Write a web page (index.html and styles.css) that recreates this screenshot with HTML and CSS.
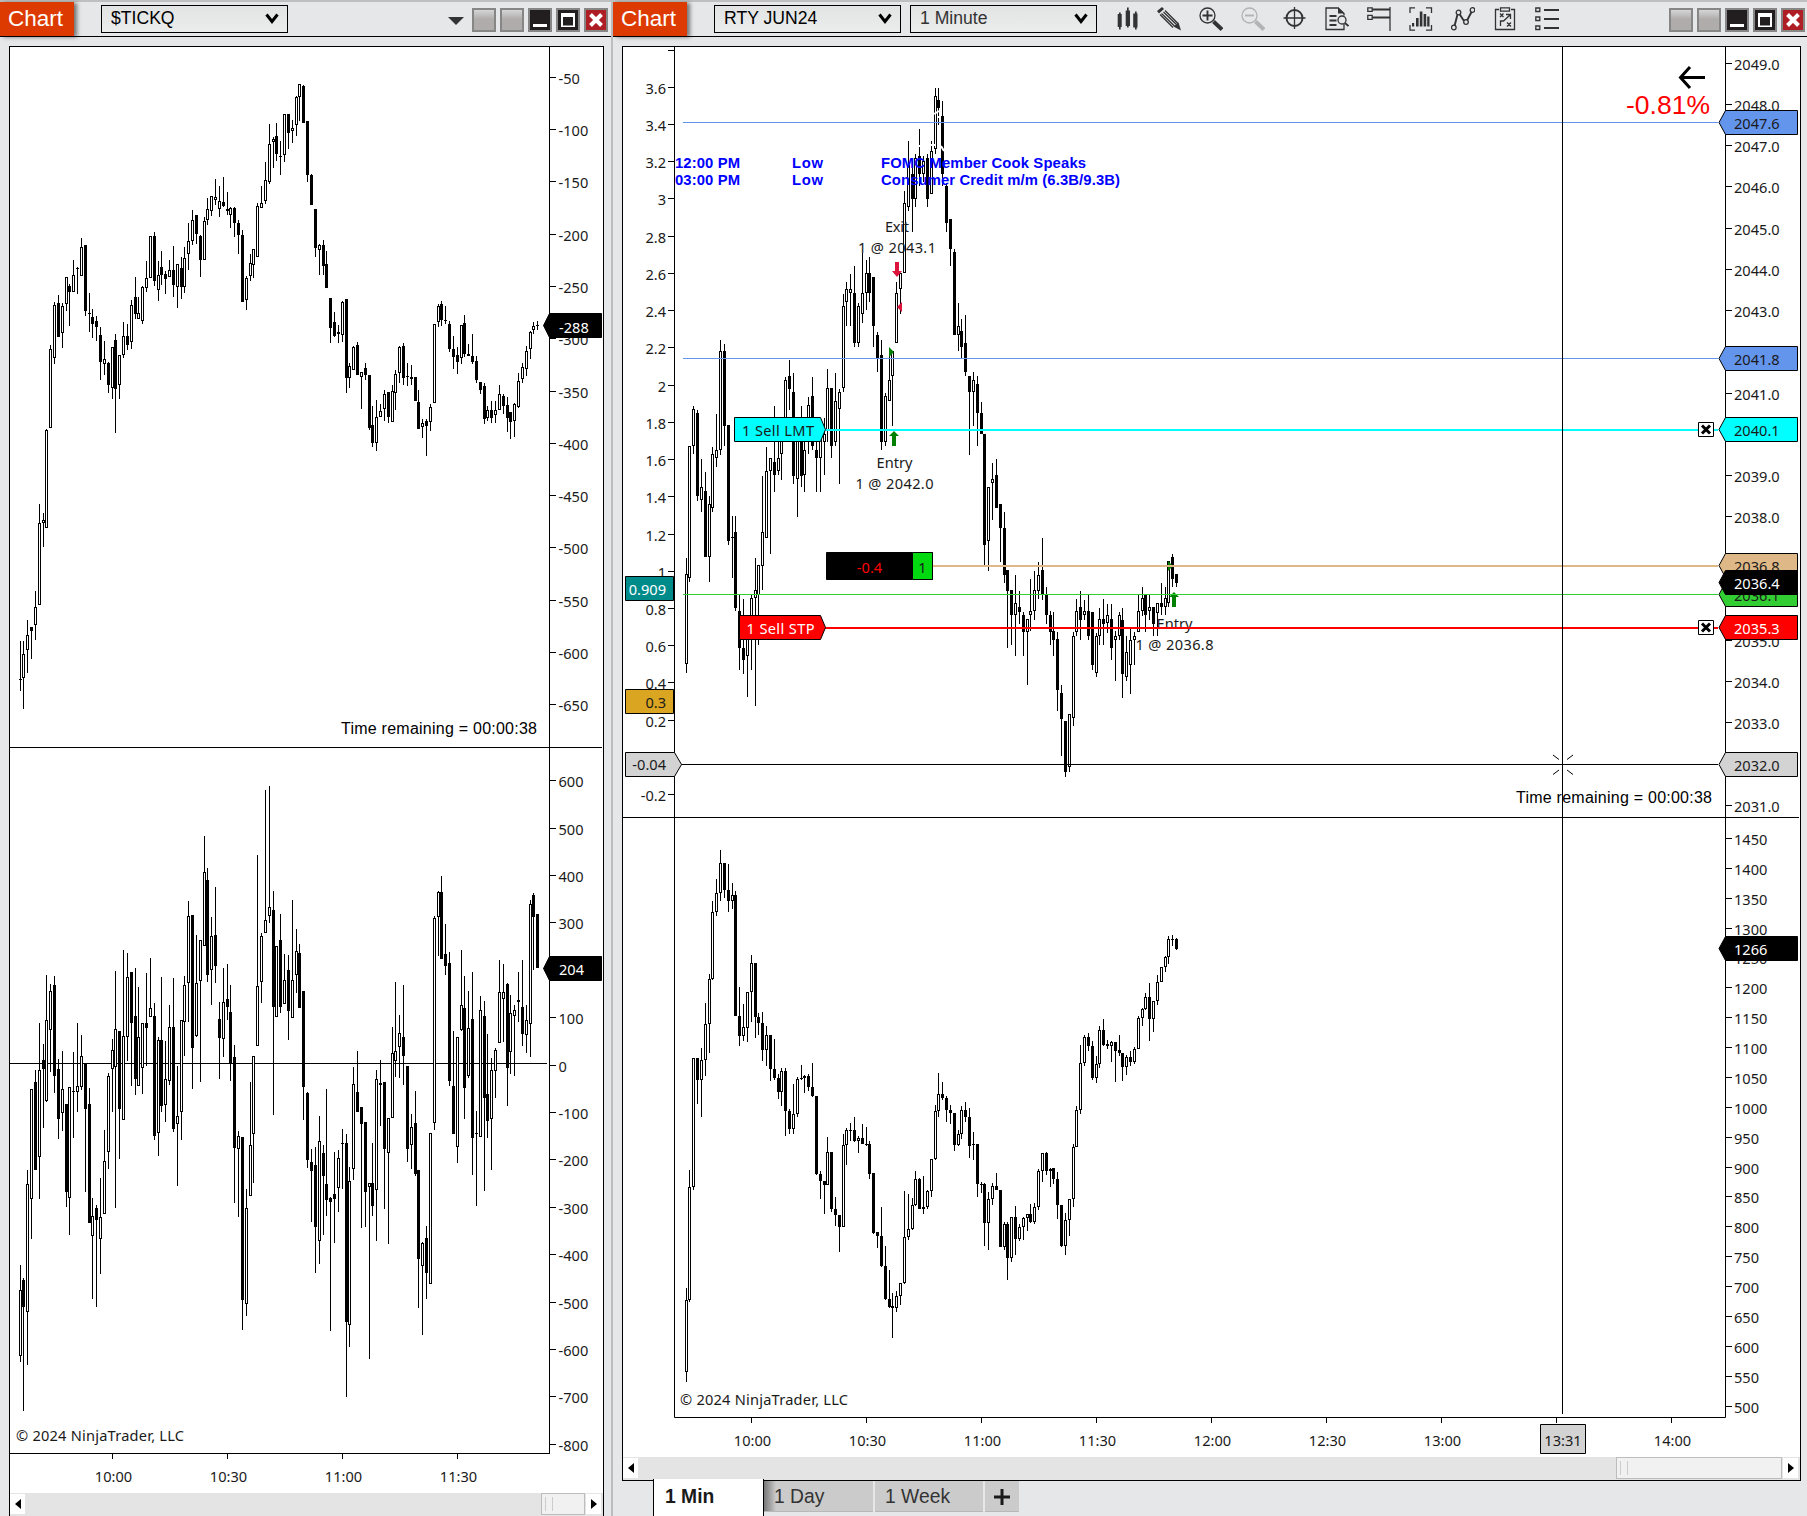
FILE: index.html
```html
<!DOCTYPE html>
<html lang="en">
<head>
    <meta charset="UTF-8">
    <meta name="viewport" content="width=device-width, initial-scale=1.0">
    <title>Chart</title>
    <link rel="stylesheet" href="styles.css">
</head>
<body>
    <div class="desk">
        <!-- $TICKQ -->
        <div class="window tick">
            <div class="header">
                <div class="logo">Chart</div>
                <div class="select">$TICKQ<svg class="caret" viewBox="0 0 14 11"><path d="M1.5 1.5L7 8.5L12.5 1.5"/></svg></div>
                <div class="tools"></div>
                <svg class="drop" viewBox="0 0 16 8"><path d="M0 0H16L8 8Z"/></svg>
                <div class="win-btns">
                    <div class="btn"></div>
                    <div class="btn"></div>
                    <div class="btn dark"><svg viewBox="0 0 20 20"><path class="w" d="M3 14h14v3H3z"/></svg></div>
                    <div class="btn dark"><svg viewBox="0 0 20 20"><path class="w" fill-rule="evenodd" d="M3 3h14v14H3zM5 7v8.500h10V7z"/></svg></div>
                    <div class="btn close"><svg viewBox="0 0 20 20"><path class="x" d="M4.500 4.500L15.500 15.500M15.500 4.500L4.500 15.500"/></svg></div>
                </div>
            </div>
            <div class="panel">
                <svg class="plot" width="593" height="1446" viewBox="10 47 593 1446">
                    <path class="axis" d="M549.500 47V1453.500M10 747.500H602M10 1453.500H550M10 1063.500H547"/>
                    <g id="tickAxis"></g>
                    <g id="tickTop"></g>
                    <g id="tickBottom"></g>
                    <text class="arial" x="341" y="734" textLength="196">Time remaining = 00:00:38</text>
                    <text class="ui" x="16" y="1441" textLength="168">© 2024 NinjaTrader, LLC</text>
                    <path class="tag black" d="M543.500 325.500L549.500 313.500H601.500V337.500H549.500Z"/>
                    <text class="ui white" x="559" y="333">-288</text>
                    <path class="tag black" d="M543.500 968.500L549.500 956.500H601.500V980.500H549.500Z"/>
                    <text class="ui white" x="559" y="975">204</text>
                </svg>
                <div class="scroll">
                    <div class="arrow"><svg viewBox="0 0 6 10"><path d="M6 0V10L0 5Z"/></svg></div>
                    <div class="track"><div class="thumb small"></div></div>
                    <div class="arrow"><svg viewBox="0 0 6 10"><path d="M0 0V10L6 5Z"/></svg></div>
                </div>
            </div>
        </div>

        <!-- RTY JUN24 -->
        <div class="window rty">
            <div class="header">
                <div class="logo">Chart</div>
                <div class="select">RTY JUN24<svg class="caret" viewBox="0 0 14 11"><path d="M1.5 1.5L7 8.5L12.5 1.5"/></svg></div>
                <div class="select interval">1 Minute<svg class="caret" viewBox="0 0 14 11"><path d="M1.5 1.5L7 8.5L12.5 1.5"/></svg></div>
                <div class="tools">
                    <svg class="icon" viewBox="0 0 24 24"><path class="f" d="M2.700 7h4v13h-4zM4 5.500h1.700v17H4zM10.700 3.500h4.300v15.500h-4.300zM12 .5h1.700v20H12zM18.200 6.500h4.300v14h-4.300zM20 4.500h1.700v18H20z"/></svg>
                    <svg class="icon" viewBox="0 0 24 24"><path class="f" d="M0 4L5 0L7 2L2 6.500ZM16.500 19.500L21.500 15.500L24 23.500Z"/><path class="s" d="M3 7.500L16 20.500M8 3.500L21 16.500M4.500 6.500L17.500 19M6.500 5L19.500 17.500"/></svg>
                    <svg class="icon" viewBox="0 0 24 24"><circle class="s" cx="8.500" cy="8.500" r="7.500"/><path class="s2" d="M8.500 3.500v10M3.500 8.500h10"/><path class="s4" d="M14.500 14.500L23 22.500"/></svg>
                    <svg class="icon off" viewBox="0 0 24 24"><circle class="s" cx="8.500" cy="8.500" r="7.500"/><path class="s2" d="M4 8.500h9"/><path class="s4" d="M14.500 14.500L23 22.500"/></svg>
                    <svg class="icon" viewBox="0 0 24 24"><circle class="s2" cx="11.500" cy="11" r="8"/><path class="s" d="M11.500 0v22M.5 11h22"/></svg>
                    <svg class="icon" viewBox="0 0 24 24"><path class="s" d="M19 17v5.500H1V1h12l6 5.500v2"/><path class="f" d="M13 0v6.500h6.500z"/><path class="s2" d="M4.500 9h7M4.500 13.500h7M4.500 18h7"/><circle class="s" cx="17" cy="13" r="4"/><path class="s2" d="M20 16l3.500 3"/></svg>
                    <svg class="icon" viewBox="0 0 24 24"><path class="s" d="M.8.8h4.400v3.500H.8zM.8 8.300h4.400v4H.8z"/><path class="s2" d="M5.500 2.500H23M5.500 10.500H23"/><path class="s" d="M23 0v24"/></svg>
                    <svg class="icon" viewBox="0 0 24 24"><path class="s" d="M1 6V.8h5M17 .8h5.500V6M1 18v5.200h5M17 23.200h5.500V18"/><path class="f" d="M3 16h2.200v3.500H3zM7 11h2.600v8.500H7zM10.800 4.500h2.600v15h-2.600zM14.600 7h2.600v12.500h-2.600zM18.200 9.500h2.300v10h-2.300z"/></svg>
                    <svg class="icon" viewBox="0 0 24 24"><path class="s2" d="M3.500 19L6.500 7.500M8.500 7L13 14M16 13.500L20.500 5"/><circle class="s" cx="2.800" cy="20.500" r="2.300"/><circle class="s" cx="7.500" cy="5.500" r="2.300"/><circle class="s" cx="15" cy="15" r="2.300"/><circle class="s" cx="21.500" cy="3" r="2.300"/></svg>
                    <svg class="icon" viewBox="0 0 24 24"><path class="s" d="M6 2.500H2.500v20h19v-20H18M7.500.8h9v3.400h-9z"/><path class="s" d="M7 6.500l3.500 3.500M10.500 6.500L7 10M14 15.500l4 4M18 15.500l-4 4M7.500 19v-5h3l6.500-6M13 7.500h4.500V12"/></svg>
                    <svg class="icon" viewBox="0 0 24 24"><path class="s" d="M.8 1h4v3.500h-4zM.8 10h4v3.500h-4zM.8 19h4v3.500h-4z"/><path class="s2" d="M9 3h15M9 12h15M9 21h15"/></svg>
                </div>
                <div class="win-btns">
                    <div class="btn"></div>
                    <div class="btn"></div>
                    <div class="btn dark"><svg viewBox="0 0 20 20"><path class="w" d="M3 14h14v3H3z"/></svg></div>
                    <div class="btn dark"><svg viewBox="0 0 20 20"><path class="w" fill-rule="evenodd" d="M3 3h14v14H3zM5 7v8.500h10V7z"/></svg></div>
                    <div class="btn close"><svg viewBox="0 0 20 20"><path class="x" d="M4.500 4.500L15.500 15.500M15.500 4.500L4.500 15.500"/></svg></div>
                </div>
            </div>
            <div class="panel">
                <svg class="plot" width="1177" height="1410" viewBox="623 47 1177 1410">
                    <path class="axis" d="M674.500 47V1417.500H1725.500V47M623 817.500H1799"/>
                    <g id="rtyAxis"></g>
                    <g id="rtyTop"></g>
                    <g id="rtyBottom"></g>

                    <!-- white label crossing the high bars -->
                    <path class="halo" d="M866 229l5-3M866 235l6-1M871 222h3M866 148h7M873 146h6M916 146h4M925 148l3-4M931 145h4M941 146l3 5M934 114l5-3M937 117h4"/>

                    <g class="news">
                        <text x="675" y="168" textLength="65">12:00 PM</text>
                        <text x="792" y="168" textLength="31">Low</text>
                        <text x="881" y="168" textLength="205">FOMC Member Cook Speaks</text>
                        <text x="675" y="185" textLength="65">03:00 PM</text>
                        <text x="792" y="185" textLength="31">Low</text>
                        <text x="881" y="185" textLength="239">Consumer Credit m/m (6.3B/9.3B)</text>
                    </g>

                    <!-- executions -->
                    <text class="ui mid" x="897" y="232" textLength="24">Exit</text>
                    <text class="ui mid" x="897" y="253" textLength="78">1 @ 2043.1</text>
                    <text class="ui mid" x="894.5" y="468" textLength="36">Entry</text>
                    <text class="ui mid" x="894.5" y="488.500" textLength="78">1 @ 2042.0</text>
                    <text class="ui mid" x="1174.500" y="629" textLength="36">Entry</text>
                    <text class="ui mid" x="1174.500" y="650" textLength="78">1 @ 2036.8</text>
                    <path class="sell" d="M895 262h4v9h3l-5 6l-5-6h3zM902 302v10l-5-5z"/>
                    <path class="buy" d="M889 347v10l5-5zM894 431l5 5h-3v10h-4v-10h-3zM1174 592l5 5h-3v10h-4v-10h-3zM1168 561v10l5-5z"/>

                    <path class="level blue" d="M683 122.500H1718M683 358.500H1718"/>
                    <path class="level green" d="M683 594.500H1718"/>
                    <path class="level tan" d="M933 566H1718"/>
                    <path class="level cyan" d="M825 430H1718"/>
                    <path class="level red" d="M825 628H1718"/>

                    <path class="tag cyan" d="M734.500 417.500H820.500L825.500 429.500L820.500 441.500H734.500Z"/>
                    <text class="ui" x="742" y="436" textLength="72">1 Sell LMT</text>
                    <path class="tag red" d="M739.500 615.500H820.500L825.500 627.500L820.500 639.500H739.500Z"/>
                    <text class="ui white" x="746.500" y="634" textLength="68">1 Sell STP</text>
                    <path class="tag black" d="M826.500 552.500H932.500V579.500H826.500Z"/>
                    <path class="tag pos" d="M912.500 552.500H932.500V579.500H912.500Z"/>
                    <text class="ui loss mid" x="869.500" y="573">-0.4</text>
                    <text class="ui mid" x="922.500" y="573">1</text>

                    <!-- crosshair -->
                    <path class="axis" d="M1562.500 47V1414M681 764.500H1718M1553 755l6 4.500M1573 755l-6 4.500M1553 774.500l6-4.500M1573 774.500l-6-4.500"/>
                    <g class="x-box">
                        <path class="box" d="M1698.500 422.500h15v14h-15zM1698.500 620.500h15v14h-15z"/>
                        <path class="cross" d="M1702 425.500l8 8M1710 425.500l-8 8M1702 623.500l8 8M1710 623.500l-8 8"/>
                    </g>

                    <path class="back" d="M1705 77.500H1681M1690 67L1680.500 77.500L1690 88"/>
                    <text class="change" x="1626" y="114" textLength="84">-0.81%</text>
                    <text class="arial" x="1516" y="803" textLength="196">Time remaining = 00:00:38</text>
                    <text class="ui" x="680" y="1404.500" textLength="168">© 2024 NinjaTrader, LLC</text>

                    <g id="rtyTags"></g>

                    <path class="tag teal" d="M625.500 576.500H673.500V600.500H625.500Z"/>
                    <text class="ui white end" x="666" y="595">0.909</text>
                    <path class="tag gold" d="M625.500 689.500H673.500V713.500H625.500Z"/>
                    <text class="ui end" x="666" y="708">0.3</text>
                    <path class="tag gray" d="M625.500 752.500H674.500L681.500 764.500L674.500 776.500H625.500Z"/>
                    <text class="ui end" x="666" y="770">-0.04</text>
                    <path class="tag gray" d="M1540.500 1424.500H1585.500V1453.500H1540.500Z"/>
                    <text class="ui mid" x="1563" y="1446">13:31</text>
                </svg>
                <div class="scroll">
                    <div class="arrow"><svg viewBox="0 0 6 10"><path d="M6 0V10L0 5Z"/></svg></div>
                    <div class="track"><div class="thumb"></div></div>
                    <div class="arrow"><svg viewBox="0 0 6 10"><path d="M0 0V10L6 5Z"/></svg></div>
                </div>
            </div>
            <div class="tabs">
                <div class="tab on">1 Min</div>
                <div class="tab day">1 Day</div>
                <div class="tab">1 Week</div>
                <div class="tab add"><svg viewBox="0 0 16 16"><path d="M8 0v16M0 8h16"/></svg></div>
            </div>
        </div>
    </div>
    <script src="chart.js"></script>
</body>
</html>
```

FILE: styles.css
```css
* {
    margin: 0;
    padding: 0;
    box-sizing: border-box;
}
body {
    font-family: "Liberation Sans", Arial, sans-serif;
    background-color: #e6e7e9;
    overflow: hidden;
}
.desk {
    display: flex;
    width: 1807px;
    height: 1516px;
    border-top: 2px solid #bfbfbf;
}
.window {
    display: flex;
    flex-direction: column;
}
.tick {
    width: 613px;
    border-right: 2px solid #bcbdbf;
}
.rty {
    flex: 1;
}
.header {
    height: 35px;
    display: flex;
    align-items: center;
    flex-shrink: 0;
    border-bottom: 1px solid #000;
}
.logo {
    width: 74px;
    height: 34px;
    line-height: 33px;
    padding-left: 8px;
    font-size: 22.5px;
    color: #fff;
    background-color: #dc3a00;
    box-shadow: 3px 1px 4px rgba(0, 0, 0, 0.5);
}
.select {
    width: 187px;
    height: 28px;
    margin-left: 27px;
    margin-bottom: 1px;
    padding: 0 8px 0 9px;
    display: flex;
    align-items: center;
    justify-content: space-between;
    font-size: 17.6px;
    color: #000;
    border: 1px solid #000;
    background: linear-gradient(#e2e4e4, #ebecec);
}
.interval {
    margin-left: 9px;
    color: #333;
}
.caret {
    width: 14px;
    height: 11px;
}
.caret path {
    fill: none;
    stroke: #000;
    stroke-width: 3;
}
.tools {
    flex: 1;
    display: flex;
    gap: 18px;
    padding-left: 18px;
}
.icon {
    width: 24px;
    height: 24px;
}
.icon path, .icon circle {
    fill: none;
    stroke: #333;
}
.icon .f {
    fill: #333;
    stroke: none;
}
.icon .s {
    stroke-width: 1.3;
}
.icon .s2 {
    stroke-width: 1.9;
}
.icon .s4 {
    stroke-width: 4;
}
.off path, .off circle {
    stroke: #b3b3b3;
}
.drop {
    width: 16px;
    height: 8px;
    margin-right: 8px;
    margin-top: 4px;
    fill: #333;
}
.win-btns {
    display: flex;
    gap: 4px;
    margin-top: 2px;
    padding-right: 2px;
}
.tick .win-btns {
    padding-right: 3px;
}
.btn {
    width: 24px;
    height: 24px;
    border: 2px solid #868686;
    background: linear-gradient(#d6d6d6, #b0acac 45%);
}
.btn svg {
    display: block;
    width: 20px;
    height: 20px;
}
.dark {
    background: #221d1f;
}
.close {
    background: #ad1f24;
}
.w {
    fill: #fff;
}
.x {
    stroke: #fff;
    stroke-width: 4;
}

.panel {
    display: flex;
    flex-direction: column;
    background-color: #fff;
    border: 1px solid #000;
}
.tick .panel {
    width: 595px;
    height: 1480px;
    margin: 9px 0 -10px 9px;
    flex-shrink: 0;
}
.rty .panel {
    width: 1179px;
    height: 1435px;
    margin: 9px 0 0 9px;
    flex-shrink: 0;
}
.plot {
    display: block;
    flex-shrink: 0;
}
.ui {
    font-family: "Noto Sans", "Open Sans", sans-serif;
    font-size: 14.6px;
    fill: #1a1a1a;
}
.arial {
    font-size: 16px;
    fill: #000;
}
.mid {
    text-anchor: middle;
}
.end {
    text-anchor: end;
}
.axis {
    fill: none;
    stroke: #000;
}
.wick, .down {
    fill: #000;
}
.up {
    fill: #fff;
    stroke: #000;
}
.news {
    font-size: 14.8px;
    font-weight: bold;
    fill: #0000ff;
}
.change {
    font-size: 26.5px;
    fill: #ff0000;
}
.sell {
    fill: #dc143c;
}
.buy {
    fill: #008000;
}
.halo {
    fill: none;
    stroke: #fff;
    stroke-width: 2;
}
.back {
    fill: none;
    stroke: #000;
    stroke-width: 3;
}
.level.blue { stroke: #6495ed; }
.level.green { stroke: #32cd32; }
.level.tan { stroke: #deb887; stroke-width: 2; }
.level.cyan { stroke: #00ffff; stroke-width: 2; }
.level.red { stroke: #ff0000; stroke-width: 2; }
.tag {
    stroke: #000;
    fill: #fff;
}
.tag.black { fill: #000; }
.tag.blue { fill: #6495ed; }
.tag.cyan { fill: #00ffff; }
.tag.red { fill: #ff0000; }
.tag.green { fill: #32cd32; }
.tag.tan { fill: #deb887; }
.tag.gray { fill: #d3d3d3; }
.tag.teal { fill: #008b8b; }
.tag.gold { fill: #daa520; }
.tag.pos { fill: #00d80f; }
.ui.white {
    fill: #fff;
}
.ui.loss {
    fill: #ff0000;
}
.box {
    fill: #fff;
    stroke: #000;
}
.cross {
    stroke: #000;
    stroke-width: 3;
}

.scroll {
    flex: 1;
    display: flex;
    background-color: #e4e4e4;
}
.arrow {
    width: 15px;
    height: 20px;
    margin-top: 1px;
    display: flex;
    align-items: center;
    justify-content: center;
    background-color: #fff;
}
.arrow svg {
    width: 6px;
    height: 10px;
}
.arrow:last-child {
    margin-right: 2px;
}
.track {
    flex: 1;
    display: flex;
    justify-content: flex-end;
    padding-right: 1px;
}
.thumb {
    width: 166px;
    height: 22px;
    padding: 3px;
    border: 1px solid #bdbdbd;
    background-color: #f1f1f1;
}
.thumb::before {
    content: "";
    display: block;
    width: 6px;
    height: 14px;
    border-left: 1px solid #ccc;
    border-right: 1px solid #ccc;
}
.small {
    width: 44px;
}

.tabs {
    display: flex;
    align-items: flex-start;
    height: 37px;
    margin-top: -2px;
    padding-left: 40px;
    font-size: 19.3px;
    color: #333;
}
.tab {
    width: 108px;
    height: 31px;
    line-height: 31px;
    margin: 2px 2px 0 0;
    padding-left: 10px;
    background-color: #cbcbcb;
    border-bottom: 1px solid #b8b8b8;
}
.tab.on {
    width: 111px;
    height: 37px;
    line-height: 35px;
    margin: 0;
    padding-left: 11px;
    font-weight: bold;
    color: #1a1a1a;
    background-color: #fff;
    border: solid #000;
    border-width: 0 1px;
}
.tab.day {
    width: 109px;
    background: linear-gradient(90deg, #777, #cbcbcb 12px);
}
.tab.add {
    width: 34px;
    padding: 8px 0 0 9px;
}
.add svg {
    display: block;
    width: 16px;
    height: 16px;
}
.add path {
    stroke: #1a1a1a;
    stroke-width: 3;
}
```

FILE: chart.js
```js
// one bar per minute: high, body top, body bottom, low, u(p) / d(own)
// values count down from the top of the pane, `unit` of them per pixel
var tickTop = '1327 1411 1414 1439 d,1327 1356 1410 1478 u,1281 1314 1348 1398 u,1297 1297 1306 1368 d,1217 1252 1293 1325 u,1025 1067 1249 1249 u,1045 1061 1068 1121 u,859 861 1079 1079 u,674 683 858 858 u,579 585 703 715 u,563 581 657 657 d,581 588 648 680 u,523 524 584 598 u,539 543 558 632 d,486 520 558 558 u,501 504 505 562 u,437 458 522 522 u,454 454 600 610 d,559 603 605 646 d,594 612 628 658 d,609 621 635 665 d,634 651 712 752 d,666 705 717 741 u,712 713 763 781 d,678 679 768 794 u,649 664 772 869 d,696 697 763 794 u,623 655 697 703 u,627 655 674 686 d,574 585 668 682 u,523 568 605 617 d,568 604 617 617 u,543 545 622 627 u,488 527 549 557 u,433 434 527 527 u,424 433 533 544 d,488 519 552 578 u,467 501 520 542 d,510 517 529 562 d,486 508 524 524 u,455 508 542 569 d,495 496 547 593 u,479 504 545 572 d,457 482 545 560 u,404 445 474 508 u,375 398 445 454 u,386 386 430 452 d,431 433 486 525 d,391 400 486 486 u,349 374 397 409 u,346 346 379 389 u,307 347 354 364 u,322 356 374 391 u,303 358 367 370 d,336 374 379 388 u,370 372 388 416 u,370 371 405 436 d,398 404 432 473 d,421 432 580 580 d,522 527 575 596 u,473 493 522 532 u,462 463 498 527 u,360 367 480 480 u,322 360 372 372 u,269 310 357 362 u,187 231 315 319 u,215 220 226 283 u,183 213 253 267 d,223 256 257 299 u,163 164 254 271 u,163 164 207 241 d,177 195 202 228 u,125 126 189 213 u,98 98 127 179 u,101 102 185 185 d,179 179 299 314 d,297 298 366 366 d,373 373 461 480 d,451 453 465 520 u,443 453 500 519 d,466 495 549 549 d,570 570 637 670 d,601 623 655 656 d,629 645 650 670 u,576 579 651 668 u,572 573 748 781 d,713 720 748 770 u,676 678 730 730 u,667 673 741 741 d,733 734 745 815 u,713 724 741 752 d,740 740 857 861 d,809 850 891 900 d,795 834 891 909 u,804 820 834 834 u,773 783 816 843 u,778 778 834 847 d,762 776 845 845 u,729 738 781 818 u,676 678 737 757 u,670 677 748 762 d,713 742 745 764 d,718 745 749 763 d,744 744 798 798 d,773 801 860 860 d,837 847 855 879 u,837 841 853 920 d,804 811 845 865 u,627 628 802 803 u,584 588 624 634 u,577 584 619 632 d,587 618 621 628 d,622 627 684 689 d,655 682 701 728 d,678 697 712 738 d,629 629 703 717 u,607 626 694 701 d,671 693 699 699 d,649 699 711 715 d,699 710 752 757 d,756 756 774 783 d,757 764 837 848 d,808 818 836 843 u,798 817 835 846 d,797 818 829 847 u,762 783 818 818 u,782 786 808 826 d,788 806 836 867 d,822 822 844 882 d,802 804 843 877 u,735 753 810 814 u,713 722 750 759 u,676 688 726 742 u,644 646 684 706 u,623 632 642 650 u,621 629 633 642 d';

var tickBottom = '1061 1112 1246 1257 u,1087 1091 1146 1357 d,870 898 1157 1263 u,706 706 928 1009 u,668 691 870 870 d,572 668 844 928 u,615 648 665 785 d,475 567 730 733 u,493 508 587 672 u,477 495 680 713 d,645 665 766 807 d,630 706 755 791 u,736 737 914 944 d,701 702 926 1001 u,632 709 710 805 u,572 700 712 753 u,597 640 702 707 u,654 655 747 914 d,704 736 977 977 d,927 963 1003 1131 u,941 946 971 1147 d,885 965 1009 1079 u,788 852 959 959 u,673 680 834 868 u,604 627 666 752 u,467 585 662 947 u,588 589 747 847 d,424 599 769 769 u,432 480 601 650 u,470 470 573 700 d,461 559 686 718 d,500 601 700 700 u,573 573 664 716 u,472 572 583 660 d,441 543 561 561 u,532 558 800 809 d,600 606 795 842 u,480 606 741 753 d,609 685 738 772 u,536 580 690 698 u,482 580 787 792 d,660 760 777 901 u,566 567 753 809 u,477 496 571 639 u,326 357 492 570 u,354 355 623 706 d,395 492 599 601 u,404 405 488 692 u,194 268 417 417 u,259 283 475 490 d,358 396 466 537 u,297 394 457 492 d,531 564 603 686 d,462 529 605 641 u,454 523 540 566 d,495 550 656 690 d,617 641 825 937 d,791 801 827 964 u,802 802 1133 1193 d,908 947 1141 1164 u,692 819 922 922 u,639 640 797 895 u,232 497 619 619 u,390 397 490 532 u,101 364 391 391 u,93 339 357 370 u,306 344 541 758 d,416 416 561 561 u,352 404 541 552 d,434 486 534 534 u,436 466 549 607 d,323 486 563 563 u,382 427 476 511 u,412 432 543 543 d,507 507 702 768 d,711 713 850 865 d,828 853 872 974 d,822 859 985 1077 d,760 811 1013 1059 u,818 835 882 1001 d,705 897 931 962 d,925 926 935 1195 d,833 917 928 1016 d,830 846 906 955 u,786 814 817 908 d,796 814 1177 1328 d,863 892 1183 1227 u,661 696 868 890 u,630 711 753 753 d,742 742 777 986 d,772 773 914 984 d,895 896 904 1251 u,814 895 943 962 d,667 685 910 1013 u,647 694 698 780 d,691 691 827 948 d,765 765 836 1019 u,580 633 765 765 u,490 629 650 682 u,556 592 621 683 u,495 600 640 698 d,659 660 827 853 d,756 783 819 868 u,709 774 878 881 d,869 870 1049 1149 d,1014 1017 1064 1203 u,982 1006 1078 1130 d,795 795 1100 1100 u,356 361 775 788 u,305 307 358 437 u,275 307 443 443 d,372 433 458 475 d,429 451 690 699 d,588 699 797 797 d,600 601 823 855 u,424 536 587 589 u,478 542 704 766 d,507 583 679 684 u,470 564 805 880 d,750 795 796 942 u,517 547 803 803 u,527 558 724 911 d,595 715 771 804 d,643 668 767 869 u,622 627 669 723 u,445 510 613 613 u,453 510 523 610 u,492 493 664 740 d,516 553 631 676 u,536 547 558 679 u,469 525 530 571 d,445 541 595 619 d,537 566 597 633 u,323 332 575 642 u,309 314 359 465 d,353 353 462 462 d';

var rtyTop = '1554 1603 1874 1901 u,1219 1219 1616 1628 u,1098 1108 1219 1244 u,1110 1119 1368 1383 d,1257 1342 1382 1418 u,1296 1353 1553 1553 d,1368 1393 1553 1628 u,1221 1243 1406 1418 u,1122 1231 1255 1283 u,900 934 1232 1245 u,912 933 1158 1220 d,1155 1155 1505 1517 d,1430 1492 1494 1616 d,1430 1476 1704 1715 d,1665 1713 1826 1890 d,1677 1824 1862 1902 d,1740 1745 1850 1973 u,1665 1675 1750 1890 u,1554 1650 1676 2000 u,1576 1576 1665 1815 u,1308 1476 1578 1652 u,1221 1294 1494 1494 u,1255 1255 1295 1542 u,1098 1266 1307 1356 d,1180 1255 1295 1307 u,1165 1180 1244 1320 u,1011 1021 1180 1190 u,960 1008 1047 1110 d,999 1056 1308 1332 d,1160 1170 1319 1431 u,1098 1190 1308 1343 d,1180 1231 1307 1356 u,1071 1095 1200 1244 u,1011 1068 1220 1232 d,1200 1230 1256 1356 d,1140 1190 1256 1356 u,1134 1183 1208 1307 u,987 1045 1170 1208 u,1044 1044 1220 1256 d,999 1083 1208 1220 u,1047 1057 1109 1332 u,762 799 1046 1058 u,727 747 788 860 u,702 747 761 860 u,678 760 910 922 d,789 799 910 922 u,641 760 824 850 u,662 700 760 812 u,651 700 760 788 d,712 712 860 922 d,877 885 959 998 d,900 945 1208 1232 d,1060 1069 1207 1220 u,945 1021 1084 1084 u,934 934 1010 1158 u,727 760 910 910 u,700 700 748 824 u,453 490 700 700 u,305 375 503 515 u,365 402 479 578 d,342 354 479 503 u,269 350 404 440 d,350 365 404 428 u,342 354 479 503 d,305 335 463 463 u,144 169 328 342 u,144 181 206 255 d,183 228 404 440 d,430 440 550 578 d,538 538 627 678 d,627 636 886 886 d,789 859 886 935 u,837 874 923 959 d,825 909 998 1010 d,1008 1008 1058 1245 d,998 1021 1057 1158 u,1010 1032 1121 1220 d,1086 1119 1182 1184 d,1182 1182 1517 1575 d,1342 1342 1505 1593 u,1269 1318 1331 1442 u,1257 1305 1406 1406 d,1392 1392 1466 1566 d,1418 1464 1605 1629 d,1590 1590 1653 1826 d,1650 1650 1727 1815 d,1605 1690 1727 1850 u,1653 1702 1716 1752 d,1716 1725 1776 1850 d,1738 1738 1776 1937 u,1617 1713 1727 1775 u,1593 1651 1715 1740 u,1566 1605 1653 1679 u,1494 1590 1662 1680 d,1642 1662 1727 1752 d,1713 1725 1776 1815 d,1716 1773 1802 1850 d,1776 1797 1950 2013 d,1937 1959 2037 2148 d,2045 2045 2198 2211 d,2022 2022 2183 2198 u,1776 1790 2036 2060 u,1677 1713 1776 1790 u,1654 1702 1740 1802 d,1680 1713 1727 1740 u,1665 1713 1790 1802 d,1716 1716 1875 1890 d,1780 1790 1900 1913 u,1704 1738 1788 1815 u,1677 1738 1752 1815 d,1692 1725 1750 1780 u,1692 1738 1826 1862 d,1775 1788 1802 1925 u,1716 1726 1788 1802 u,1704 1740 1902 1974 d,1790 1838 1913 1925 u,1767 1800 1875 1962 u,1776 1788 1802 1875 u,1665 1713 1776 1776 u,1642 1675 1713 1730 u,1665 1665 1727 1776 d,1665 1702 1715 1740 u,1702 1702 1752 1790 d,1690 1690 1720 1790 u,1629 1690 1703 1727 d,1642 1675 1702 1727 u,1564 1564 1690 1703 u,1542 1551 1617 1642 d,1602 1602 1629 1642 d';

var rtyBottom = '1062 1088 1249 1270 u,800 838 1088 1093 u,551 551 838 845 u,551 551 601 654 d,529 556 600 682 u,429 477 555 592 u,364 376 476 540 u,202 228 376 379 u,155 185 228 237 u,89 118 185 203 u,118 118 179 197 d,120 179 203 227 d,162 190 203 221 u,180 189 459 459 d,393 459 503 524 d,431 483 502 513 u,404 404 484 516 u,322 341 404 471 u,340 340 461 506 d,452 461 474 500 d,449 473 534 559 d,481 500 533 569 u,500 500 576 602 d,509 575 597 600 d,588 596 628 643 d,573 580 628 657 u,573 580 670 724 d,665 670 710 721 d,609 675 709 720 u,594 598 675 683 u,568 595 599 601 d,590 592 596 630 u,588 591 616 624 d,563 616 636 637 d,635 635 809 811 d,803 808 825 865 d,825 825 834 899 d,727 760 833 833 u,760 760 887 893 d,860 886 901 924 d,900 900 926 982 d,721 744 926 927 u,708 711 744 790 u,696 711 713 736 u,682 711 736 737 d,725 730 735 762 u,698 729 743 743 d,704 742 744 747 d,735 743 808 820 d,807 807 941 942 d,939 939 946 974 d,882 946 1014 1015 d,968 1014 1087 1089 d,1022 1087 1104 1107 d,1074 1102 1107 1173 d,1070 1080 1106 1116 u,1052 1052 1080 1101 u,847 949 1052 1053 u,853 932 950 955 u,862 878 932 933 u,802 821 878 881 u,818 820 886 887 d,813 883 886 897 d,844 847 883 887 u,776 776 847 860 u,656 670 776 777 u,585 632 670 683 u,604 631 641 645 d,635 640 668 694 d,655 667 674 697 d,673 673 744 757 d,711 720 744 747 u,659 667 720 732 u,649 667 683 694 d,662 683 746 774 d,716 742 745 777 d,742 742 832 860 d,826 831 833 852 d,828 832 918 968 d,849 865 918 979 u,828 836 865 877 u,806 836 845 845 d,844 844 972 972 d,915 920 972 979 u,915 920 996 1044 d,905 905 996 1004 u,881 905 954 990 d,920 927 954 958 u,904 907 926 955 u,897 899 907 935 u,875 898 916 917 d,873 883 916 920 u,799 803 883 888 u,762 763 803 827 u,760 762 803 811 d,796 797 803 837 u,796 796 821 832 d,805 821 879 908 d,878 878 968 972 d,895 911 968 988 u,864 865 911 946 u,742 749 865 882 u,657 668 749 750 u,522 563 668 675 u,500 505 563 570 u,495 505 525 536 d,513 525 597 600 d,546 565 597 608 u,480 490 565 574 u,464 490 522 524 d,511 521 525 531 d,514 516 525 561 u,515 515 535 604 d,500 534 541 548 d,541 541 572 602 d,545 550 572 590 u,535 549 561 570 d,526 532 561 565 u,458 463 532 532 u,440 443 463 480 u,408 416 443 444 u,385 416 465 513 d,425 425 465 493 u,367 383 425 433 u,350 350 383 383 u,326 327 350 360 u,280 288 327 342 u,278 287 290 302 d,285 288 309 311 d';

function put(id, html) {
    document.getElementById(id).innerHTML = html;
}

function candles(id, data, x0, step, top, unit) {
    var out = '';
    data.split(',').forEach(function (row, i) {
        var v = row.split(' ');
        var y = v.slice(0, 4).map(function (n) {
            return Math.round(top + n / unit - 0.3);
        });
        var x = Math.floor(x0 + step * i);
        var h = y[2] - y[1];
        out += '<rect class="wick" x="' + x + '" y="' + y[0] + '" width="1" height="' + Math.max(1, y[3] - y[0]) + '"/>';
        if (v[4] == 'u' && h > 1) {
            out += '<rect class="up" x="' + (x - 0.5) + '" y="' + (y[1] + 0.5) + '" width="2" height="' + (h - 1) + '"/>';
        } else {
            out += '<rect class="down" x="' + (x - 1) + '" y="' + y[1] + '" width="3" height="' + Math.max(1, h) + '"/>';
        }
    });
    put(id, out);
}

// price scale: tick marks start at x, labels at tx
function scale(x, tx, cls, y0, dy, from, by, count, digits) {
    var out = '';
    for (var i = 0; i < count; i++) {
        var y = Math.floor(y0 + dy * i);
        var n = from - by * i;
        var label = digits == 'g' ? String(+n.toFixed(1)) : n.toFixed(digits);
        out += '<path class="axis" d="M' + x + ' ' + (y + 0.5) + 'h6"/>';
        out += '<text class="ui ' + cls + '" x="' + tx + '" y="' + (y + 7) + '">' + label + '</text>';
    }
    return out;
}

function times(x0, step, y, ty, labels) {
    return labels.map(function (t, i) {
        var x = Math.floor(x0 + step * i);
        return '<path class="axis" d="M' + (x + 0.5) + ' ' + y + 'v5"/>' +
            '<text class="ui mid" x="' + (x + 1.5) + '" y="' + ty + '">' + t + '</text>';
    }).join('');
}

function tag(y, color, text, cls) {
    return '<path class="tag ' + color + '" d="M1719 ' + y + 'L1725.5 ' + (y - 12) + 'H1797.5V' + (y + 12) + 'H1725.5Z"/>' +
        '<text class="ui ' + (cls || '') + '" x="1734" y="' + (y + 6.5) + '">' + text + '</text>';
}

put('tickAxis',
    scale(550, 558.5, '', 77.1, 52.32, -50, 50, 13, 0) +
    scale(550, 558.5, '', 780.6, 47.41, 600, 100, 15, 0) +
    times(112.4, 115.07, 1454, 1482, ['10:00', '10:30', '11:00', '11:30']));

put('rtyAxis',
    '<path class="axis" d="M668 50.5h6"/>' +
    scale(668, 666, 'end', 87.3, 37.23, 3.6, 0.2, 20, 'g') +
    scale(1726, 1734, '', 63.3, 41.22, 2049, 1, 19, 1) +
    scale(1726, 1734, '', 838.5, 29.87, 1450, 50, 20, 0) +
    times(751.6, 114.96, 1418, 1446, ['10:00', '10:30', '11:00', '11:30', '12:00', '12:30', '13:00', '', '14:00']));

candles('tickTop', tickTop, 20, 3.8356, 40, 2.208);
candles('tickBottom', tickBottom, 20, 3.8356, 740, 2.0206);
candles('rtyTop', rtyTop, 686.05, 3.832, 40, 3);
candles('rtyBottom', rtyBottom, 686.05, 3.832, 810, 2.221);

put('rtyTags',
    tag(122.5, 'blue', '2047.6') +
    tag(358.5, 'blue', '2041.8') +
    tag(429.5, 'cyan', '2040.1') +
    tag(565.5, 'tan', '2036.8') +
    tag(594.5, 'green', '2036.1') +
    tag(582.5, 'black', '2036.4', 'white') +
    tag(627.5, 'red', '2035.3', 'white') +
    tag(764.5, 'gray', '2032.0') +
    tag(948.5, 'black', '1266', 'white'));
```
